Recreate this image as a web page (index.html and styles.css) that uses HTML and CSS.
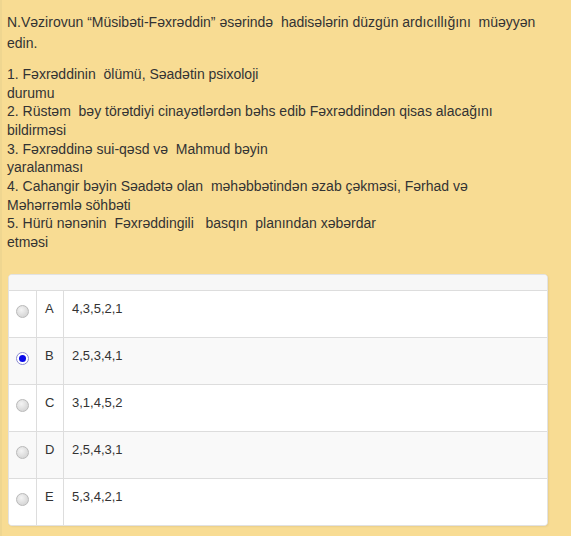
FILE: index.html
```html
<!DOCTYPE html>
<html>
<head>
<meta charset="utf-8">
<link rel="stylesheet" href="styles.css">
</head>
<body>
<div class="page">
  <div class="question">
    <p class="title">N.Vəzirovun “Müsibəti-Fəxrəddin” əsərində&nbsp; hadisələrin düzgün ardıcıllığını&nbsp; müəyyən edin.</p>
    <p class="items">1. Fəxrəddinin&nbsp; ölümü, Səadətin psixoloji<br>durumu<br>2. Rüstəm&nbsp; bəy törətdiyi cinayətlərdən bəhs edib Fəxrəddindən qisas alacağını<br>bildirməsi<br>3. Fəxrəddinə sui-qəsd və&nbsp; Mahmud bəyin<br>yaralanması<br>4. Cahangir bəyin Səadətə olan&nbsp; məhəbbətindən əzab çəkməsi, Fərhad və<br>Məhərrəmlə söhbəti<br>5. Hürü nənənin&nbsp; Fəxrəddingili&nbsp;&nbsp; basqın&nbsp; planından xəbərdar<br>etməsi</p>
  </div>
  <div class="answers">
    <div class="head"></div>
    <div class="row">
      <div class="c-radio"><span class="radio"></span></div>
      <div class="c-letter">A</div>
      <div class="c-text">4,3,5,2,1</div>
    </div>
    <div class="row alt">
      <div class="c-radio"><span class="radio checked"></span></div>
      <div class="c-letter">B</div>
      <div class="c-text">2,5,3,4,1</div>
    </div>
    <div class="row">
      <div class="c-radio"><span class="radio"></span></div>
      <div class="c-letter">C</div>
      <div class="c-text">3,1,4,5,2</div>
    </div>
    <div class="row alt">
      <div class="c-radio"><span class="radio"></span></div>
      <div class="c-letter">D</div>
      <div class="c-text">2,5,4,3,1</div>
    </div>
    <div class="row last">
      <div class="c-radio"><span class="radio"></span></div>
      <div class="c-letter">E</div>
      <div class="c-text">5,3,4,2,1</div>
    </div>
  </div>
</div>
</body>
</html>
```
FILE: styles.css
```css
html, body {
  margin: 0;
  padding: 0;
  background: #f8dc93;
}
body {
  font-family: "Liberation Sans", Arial, sans-serif;
  font-size: 13px;
  color: #333;
}
.page {
  width: 571px;
  height: 536px;
  overflow: hidden;
  border-left: 2px solid #efd690;
  box-sizing: border-box;
}
.question {
  padding: 12px 20px 0 5px;
  font-size: 14px;
}
.title {
  margin: 0;
  line-height: 21px;
}
.items {
  margin: 11px 0 0 0;
  line-height: 18.67px;
}
.answers {
  margin: 22px 0 0 6px;
  width: 538px;
  background: #fff;
  border: 1px solid #e2e2e2;
  border-radius: 4px;
  box-shadow: 1px 1px 2px rgba(0,0,0,0.06);
  overflow: hidden;
}
.head {
  height: 15px;
  background: #f7f7f7;
  border-bottom: 1px solid #ddd;
}
.row {
  display: flex;
  height: 46px;
  border-bottom: 1px solid #ddd;
  background: #fff;
}
.row.alt {
  background: #f9f9f9;
}
.row.last {
  border-bottom: none;
}
.c-radio {
  width: 28px;
  border-right: 1px solid #ddd;
  display: flex;
  justify-content: center;
  padding-top: 14px;
  padding-right: 1px;
  box-sizing: border-box;
}
.c-letter {
  width: 27px;
  border-right: 1px solid #ddd;
  padding: 9px 0 0 8px;
  box-sizing: border-box;
  line-height: 18px;
}
.c-text {
  padding: 9px 0 0 8px;
  line-height: 18px;
}
.radio {
  width: 11px;
  height: 11px;
  border-radius: 50%;
  border: 1px solid #b9b9b9;
  background: radial-gradient(circle at 40% 35%, #f4f4f4 0%, #dcdcdc 60%, #cfcfcf 100%);
  position: relative;
}
.radio.checked {
  background: #fff;
  border-color: #8b8bd0;
}
.radio.checked::after {
  content: "";
  position: absolute;
  left: 2px;
  top: 2px;
  width: 7px;
  height: 7px;
  border-radius: 50%;
  background: #0a0ae8;
}
```
